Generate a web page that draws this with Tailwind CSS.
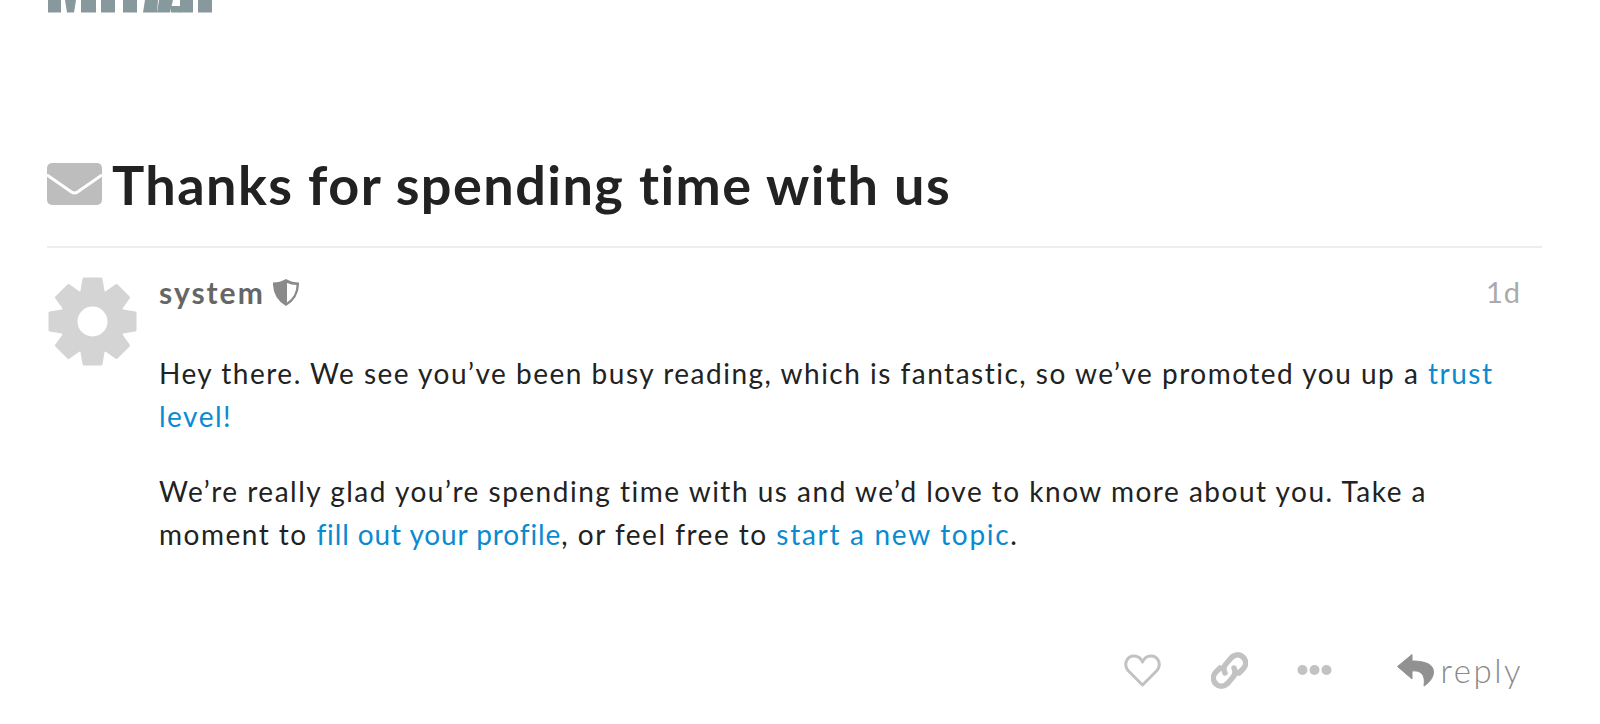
<!DOCTYPE html>
<html>
<head>
    <title>Thanks for spending time with us</title>
    <meta charset="utf-8">
    <script src="https://cdn.jsdelivr.net/npm/@tailwindcss/browser@4"></script>
</head>
<body class="bg-white text-[#222] font-['Lato',sans-serif] h-[724px] overflow-hidden">
    <div class="pl-[47px] pr-[58px]">
        <!-- Logo, cut off by the top of the window -->
        <div class="flex h-[13px] w-[170px] overflow-hidden">
            <svg width="170" height="13" viewBox="0 0 170 13" fill="#88999d">
                <rect x="1" y="0" width="13" height="12.500"/>
                <polygon points="18,0 29,0 27,12.500 20,12.500"/>
                <rect x="34" y="0" width="15" height="12.500"/>
                <rect x="54" y="0" width="14" height="12.500"/>
                <rect x="76" y="0" width="14" height="12.500"/>
                <polygon points="98,0 111,0 110,12.500 96,12.500"/>
                <polygon points="112,0 126,0 123,12.500 110,12.500"/>
                <rect x="124" y="6" width="10" height="6.500"/>
                <rect x="133" y="0" width="13" height="12.500"/>
                <rect x="151" y="0" width="14" height="12.500"/>
            </svg>
        </div>

        <!-- Topic title -->
        <div class="mt-[150px] h-[85px] flex items-start border-b-2 border-[#eee]">
            <svg class="w-[55px] h-[42px] shrink-0" viewBox="0 0 55 42">
                <rect width="55" height="42" rx="5" fill="#bdbdbd"/>
                <path d="M0 12 L24.500 29 Q27.500 31 30.500 29 L55 12" fill="none" stroke="#fff" stroke-width="3"/>
            </svg>
            <h1 class="ml-[10px] -mt-[6px] text-[54px] leading-[56px] font-bold tracking-[1.45px] whitespace-nowrap">Thanks for spending time with us</h1>
        </div>

        <!-- Post -->
        <div class="flex">
            <svg class="mt-[29px] ml-[1px] w-[89px] h-[89px] shrink-0" viewBox="0 0 89 89">
                <g fill="#d4d4d4" stroke="#d4d4d4" stroke-width="3" stroke-linejoin="round">
                    <circle cx="44.500" cy="44.500" r="31"/>
                    <polygon points="36,2 53,2 56,20 33,20"/>
                    <polygon points="36,2 53,2 56,20 33,20" transform="rotate(45 44.500 44.500)"/>
                    <polygon points="36,2 53,2 56,20 33,20" transform="rotate(90 44.500 44.500)"/>
                    <polygon points="36,2 53,2 56,20 33,20" transform="rotate(135 44.500 44.500)"/>
                    <polygon points="36,2 53,2 56,20 33,20" transform="rotate(180 44.500 44.500)"/>
                    <polygon points="36,2 53,2 56,20 33,20" transform="rotate(225 44.500 44.500)"/>
                    <polygon points="36,2 53,2 56,20 33,20" transform="rotate(270 44.500 44.500)"/>
                    <polygon points="36,2 53,2 56,20 33,20" transform="rotate(315 44.500 44.500)"/>
                </g>
                <circle cx="44.500" cy="44.500" r="15" fill="#fff"/>
            </svg>
            <div class="ml-[22px] flex-1 pr-[21px]">
                <div class="mt-[24px] flex items-center justify-between h-[40px]">
                    <div class="flex items-center">
                        <span class="text-[#666] text-[30px] font-bold tracking-[2px]">system</span>
                        <svg class="ml-[8px] w-[26px] h-[27px]" viewBox="0 0 26 27">
                            <path fill="#8a8a8a" d="M13 0 Q19 3.500 26 3.500 Q26.500 19 13 27 Q-0.500 19 0 3.500 Q7 3.500 13 0 Z"/>
                            <path fill="#fff" d="M14 4 Q18.500 6 23.500 6 Q23.500 17 14 23.500 Z"/>
                        </svg>
                    </div>
                    <span class="text-[#aaa] text-[29px] tracking-[1px]">1d</span>
                </div>
                <p class="mt-[40px] text-[28px] leading-[43px] tracking-[1.5px]">Hey there. We see you’ve been busy reading, which is fantastic, so we’ve promoted you up a <a href="#" class="text-[#0a8ad0]">trust level!</a></p>
                <p class="mt-[32px] text-[28px] leading-[43px] tracking-[1.5px]">We’re really glad you’re spending time with us and we’d love to know more about you. Take a moment to <a href="#" class="text-[#0a8ad0] tracking-[0.9px]">fill out your profile</a>, or feel free to <a href="#" class="text-[#0a8ad0] tracking-[1.7px]">start a new topic</a>.</p>

                <!-- Post actions -->
                <div class="mt-[94px] flex items-center justify-end h-[40px]">
                    <svg class="w-[37px] h-[33px]" viewBox="0 0 37 33">
                        <path fill="none" stroke="#c2c2c2" stroke-width="3" stroke-linejoin="round" d="M18.500 31 L4 16.500 C-1 10 3 2 10 2 C14 2 17 4.500 18.500 8 C20 4.500 23 2 27 2 C34 2 38 10 33 16.500 Z"/>
                    </svg>
                    <svg class="ml-[50px] w-[37px] h-[37px]" viewBox="0 0 37 37">
                        <g fill="none" stroke="#c2c2c2" stroke-width="5.500" stroke-linecap="round">
                            <path d="M14 21 C12 17 13 14 15 12 L20 6 C24 2 29 2 32 5 C36 9 35 14 32 17 L28 21"/>
                            <path d="M23 16 C25 20 24 23 22 25 L17 31 C13 35 8 35 5 32 C1 28 2 23 5 20 L9 16"/>
                        </g>
                    </svg>
                    <svg class="ml-[49px] w-[35px] h-[14px]" viewBox="0 0 35 14" fill="#c2c2c2">
                        <circle cx="5.500" cy="7" r="5"/>
                        <circle cx="17.500" cy="7" r="5"/>
                        <circle cx="29.500" cy="7" r="5"/>
                    </svg>
                    <svg class="ml-[65px] w-[38px] h-[33px]" viewBox="0 0 38 33">
                        <path fill="#919191" stroke="#919191" stroke-linejoin="round" d="M15 0.500 L0.500 12.500 L15 25 V17 C23 16 29 20 27 32 C33 28 38 22 36 15 C34 9 25 7 15 7 Z"/>
                    </svg>
                    <span class="ml-[6px] -mr-[2px] text-[#8a8a8a] text-[33px] font-light leading-none tracking-[2.5px]">reply</span>
                </div>
            </div>
        </div>
    </div>
</body>
</html>
